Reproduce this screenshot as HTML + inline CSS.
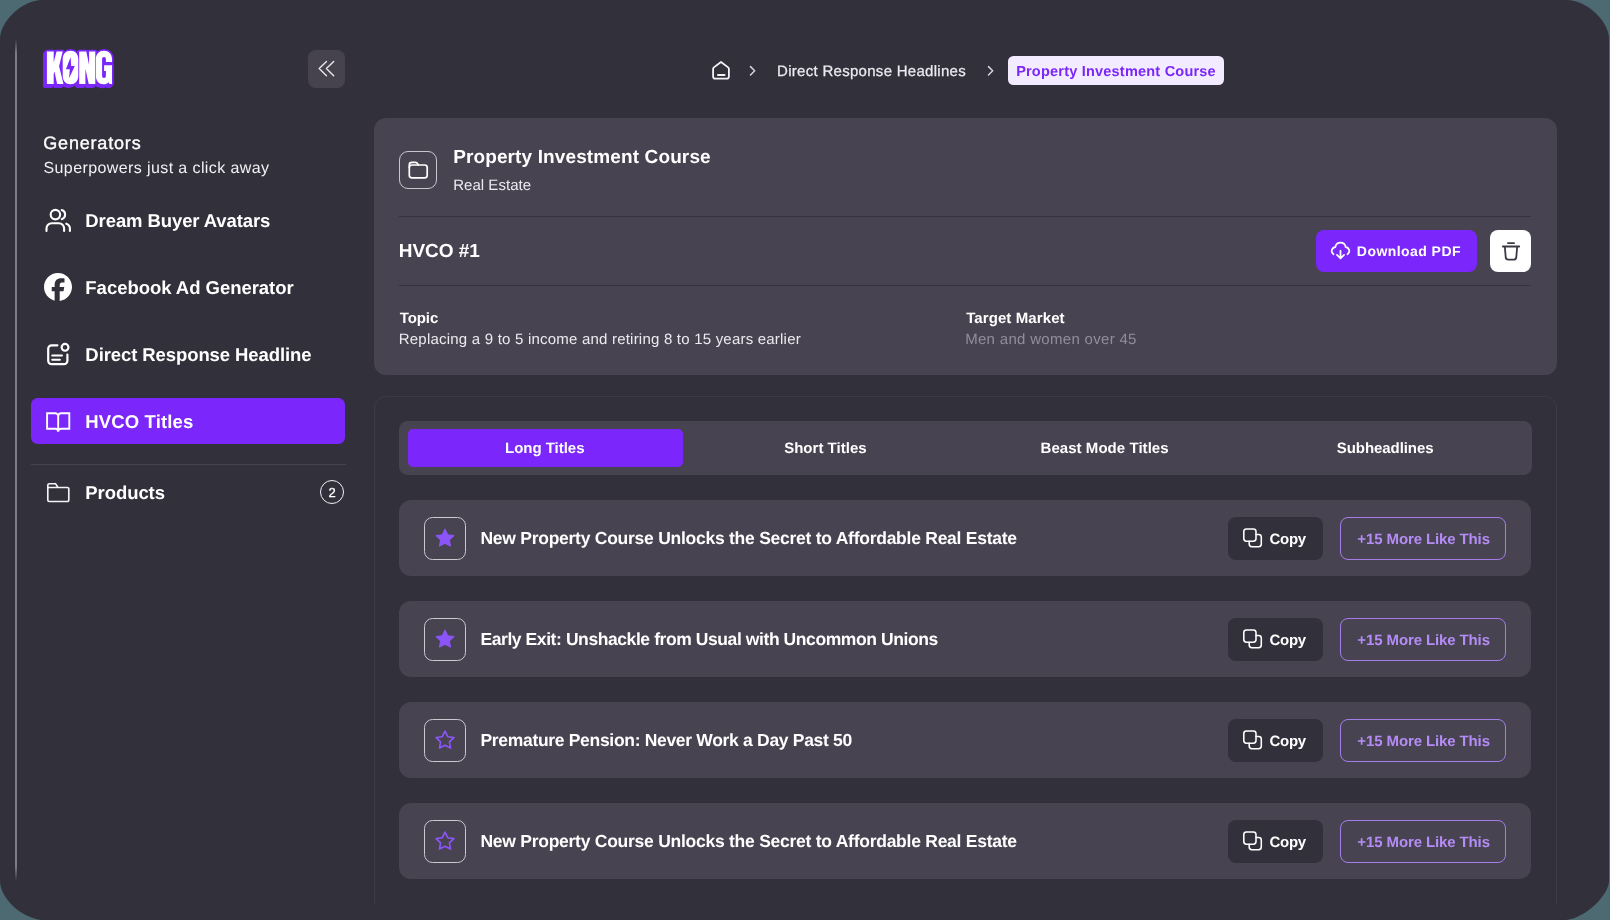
<!DOCTYPE html>
<html lang="en">
<head>
<meta charset="utf-8">
<title>Kong - HVCO Titles</title>
<style>
:root{--bg:#32303b;--card:#474350;--pur:#7b26fa;--teal:#4d6a73;}
*{box-sizing:border-box;margin:0;padding:0}
html,body{width:1610px;height:920px;overflow:hidden;background:var(--teal)}
body{position:relative;font-family:"Liberation Sans",sans-serif}
.a{position:absolute;display:block}
.t{position:absolute;white-space:nowrap;line-height:normal;font-family:"Liberation Sans",sans-serif}
#txt{position:absolute;left:0;top:0;width:1610px;height:920px;will-change:transform;text-rendering:geometricPrecision}
#app{position:absolute;left:0;top:0}
#vline{position:absolute;left:15px;top:39px;width:2px;height:842px;border-radius:1px;
  background:linear-gradient(to bottom,rgba(125,123,136,0) 0,rgba(125,123,136,1) 14px,rgba(125,123,136,1) 828px,rgba(125,123,136,0) 842px)}
#collapse{left:307.600px;top:49.800px;width:37.400px;height:38.100px;border-radius:8px;background:#46434f}
#active{left:31px;top:398.300px;width:314.400px;height:45.700px;border-radius:6.500px;background:var(--pur)}
#sdiv{left:31px;top:464px;width:315px;height:1px;background:#46434f}
#badge{left:320.100px;top:480.250px;width:24px;height:24px;border-radius:50%;border:1.5px solid #f2f1f6}
#chip{left:1007.950px;top:55.700px;width:216.350px;height:29.800px;border-radius:5.500px;background:#f3ebff}
#hcard{left:373.800px;top:118.400px;width:1183px;height:256.400px;border-radius:12px;background:var(--card)}
#ibox{left:399px;top:150.800px;width:38px;height:38px;border-radius:9px;border:1.200px solid #c9c7ce}
.hdiv{left:399px;width:1132px;height:1px;background:#35333d}
#dl{left:1315.700px;top:229.700px;width:161.700px;height:42.6px;border-radius:8px;background:var(--pur)}
#trash{left:1490px;top:229.7px;width:41.200px;height:42.6px;border-radius:8px;background:#fff}
#panel{left:373.800px;top:396.100px;width:1183.200px;height:540px;border-radius:12px;border:1px solid #3d3b47}
#tabs{left:399px;top:420.800px;width:1132.500px;height:54.300px;border-radius:8.500px;background:var(--card)}
#atab{left:407.600px;top:429.200px;width:275.500px;height:38px;border-radius:5px;background:var(--pur)}
.row{position:absolute;left:398.800px;width:1132.700px;height:76.200px;border-radius:12px;background:var(--card)}
.sbox{position:absolute;left:424.300px;width:42.200px;height:42.200px;border-radius:8.500px;border:1.200px solid #cbc9d0}
.copy{position:absolute;left:1227.8px;width:95.5px;height:42.8px;border-radius:8px;background:var(--bg)}
.more{position:absolute;left:1340.2px;width:166.3px;height:42.8px;border-radius:8px;border:1.5px solid #a47de9}
#fade{left:370px;top:904px;width:1195px;height:20px;background:var(--bg)}
</style>
</head>
<body>
<svg id="app" width="1610" height="920" viewBox="0 0 1610 920"><path fill="#32303b" d="M42.100 0H1566.900C1586.300 0 1609 21 1609 38.900V880.900C1609 894.900 1584 920.300 1562 920.300H47C22 920.300 0 897.900 0 880.900V38.900C0 21 22.700 0 42.100 0z"/></svg>
<div id="vline"></div>

<!-- logo -->
<svg class="a" id="logo" style="left:36px;top:42px" width="90" height="54" viewBox="0 0 90 54">
  <defs>
    <g id="kong">
      <path d="M10.9 9.4h6.8v11.2l2.8-11.2h6.2l-3.6 14.8 4.4 17.8h-6.4l-2.6-12.4-.8 2.6v9.8h-6.8z"/>
      <path fill-rule="evenodd" d="M34.5 8.8c4.6 0 7.8 3.2 7.8 8.4v16.6c0 5.2-3.2 8.5-7.8 8.5s-7.8-3.3-7.8-8.5V17.200c0-5.2 3.200-8.400 7.800-8.400z"/>
      <path d="M43.200 9.400h7.100l2.800 13.600V9.400h6.200V42h-6.600l-3.300-15.200V42h-6.200z"/>
      <path fill-rule="evenodd" d="M67.900 8.800c4.700 0 8.100 3.100 8.100 8.300v2.900h-6.100v-2.700c0-1.500-.7-2.200-1.900-2.200s-1.900.7-1.900 2.200v16.400c0 1.500.7 2.200 1.900 2.200s1.900-.7 1.900-2.200V29h-1.800v-5.800H76V42h-2.600l-.9-1.800c-1.100 1.400-2.800 2.100-4.900 2.100-4.700 0-7.700-3.300-7.700-8.500V17.100c0-5.200 3.300-8.300 8-8.300z"/>
    </g>
  </defs>
  <g fill="#7b26fa" stroke="#7b26fa" stroke-linejoin="round">
    <use href="#kong" stroke-width="3.4"/>
    <use href="#kong" stroke-width="3.4" transform="translate(-1.1,1.1)"/>
    <use href="#kong" stroke-width="3.4" transform="translate(-2.2,2.2)"/>
  </g>
  <use href="#kong" fill="#fff"/>
  <path d="M34.6 15.200l-4.700 12.100h3.900l-.7 8.900 5.700-12.100h-3.600z" fill="#7b26fa"/>
</svg>

<!-- collapse -->
<div class="a" id="collapse"></div>
<svg class="a" style="left:307px;top:50px" width="38" height="38" viewBox="0 0 38 38" fill="none" stroke="#eceaf0" stroke-width="1.350" stroke-linecap="round" stroke-linejoin="round">
  <path d="M19.500 11.400L12.200 18.550l7.300 7.150M26.700 11.400L19.400 18.550l7.300 7.150"/>
</svg>

<!-- nav icons -->
<svg class="a" style="left:44px;top:206px" width="30" height="30" viewBox="0 0 30 30" fill="none" stroke="#fff" stroke-width="2.100" stroke-linecap="round" stroke-linejoin="round">
  <circle cx="11.400" cy="8.600" r="4.750"/>
  <path d="M2.500 25v-2.500a5.200 5.200 0 0 1 5.200-5.200h7.200a5.200 5.200 0 0 1 5.200 5.200V25"/>
  <path d="M17.700 4a4.800 4.800 0 0 1 0 9.200"/>
  <path d="M22.300 17.700a5.200 5.200 0 0 1 3.600 4.900V25"/>
</svg>
<svg class="a" style="left:44.200px;top:272.900px" width="28" height="28" viewBox="0 0 24 24">
  <path fill="#fff" d="M9.101 23.691v-7.980H6.627v-3.667h2.474v-1.580c0-4.085 1.848-5.978 5.858-5.978.401 0 .955.042 1.468.103a8.680 8.680 0 0 1 1.141.195v3.325a8.623 8.623 0 0 0-.653-.036 26.805 26.805 0 0 0-.733-.009c-.707 0-1.259.096-1.675.309a1.686 1.686 0 0 0-.679.622c-.258.420-.374.995-.374 1.752v1.297h3.919l-.386 2.103-.287 1.564h-3.246v8.245C19.396 23.238 24 18.179 24 12.044c0-6.627-5.373-12-12-12s-12 5.373-12 12c0 5.628 3.874 10.350 9.101 11.647Z"/>
</svg>
<svg class="a" style="left:44px;top:341px" width="28" height="28" viewBox="0 0 28 28" fill="none" stroke="#fff" stroke-width="2.200" stroke-linecap="round" stroke-linejoin="round">
  <path d="M13.400 4.300H7.700a3.500 3.500 0 0 0-3.500 3.500v11.900a3.500 3.500 0 0 0 3.500 3.500h12.200a3.500 3.500 0 0 0 3.500-3.500v-6.100"/>
  <circle cx="21.050" cy="6.350" r="3.400"/>
  <path stroke-width="2" d="M8.200 14.400h9.800M8.200 18.800h7.700"/>
</svg>

<div class="a" id="active"></div>
<svg class="a" style="left:44px;top:408px" width="28" height="28" viewBox="0 0 28 28" fill="none" stroke="#fff" stroke-width="1.900" stroke-linejoin="miter">
  <path d="M14.200 8.300a3 3 0 0 0-3-3H3.100v15.500h8.100a3 3 0 0 1 3 3 3 3 0 0 1 3-3h8.100V5.300h-8.100a3 3 0 0 0-3 3zM14.200 8.300v15"/>
</svg>

<div class="a" id="sdiv"></div>
<svg class="a" style="left:44px;top:478px" width="28" height="28" viewBox="0 0 28 28" fill="none" stroke="#f4f3f7" stroke-width="1.650" stroke-linejoin="round">
  <path d="M3.800 9.500V7.200a1.500 1.500 0 0 1 1.500-1.500h5.400a1.500 1.500 0 0 1 1.300.700l2 3.100h9.300a1.500 1.500 0 0 1 1.500 1.500v11a1.500 1.500 0 0 1-1.500 1.500H5.300a1.500 1.500 0 0 1-1.500-1.500zM3.800 9.500h10.200"/>
</svg>
<div class="a" id="badge"></div>

<!-- breadcrumb -->
<svg class="a" style="left:709.200px;top:58.300px" width="24" height="24" viewBox="0 0 24 24" fill="none" stroke="#f4f3f7" stroke-width="1.800" stroke-linecap="round" stroke-linejoin="round">
  <path d="M12 4l-7.100 5.400a2.200 2.200 0 0 0-.800 1.700V18.400a2.200 2.200 0 0 0 2.200 2.200h11.400a2.200 2.200 0 0 0 2.200-2.200V11.100a2.200 2.200 0 0 0-.800-1.700z"/>
  <path d="M8.900 17h6.700"/>
</svg>
<svg class="a" style="left:740px;top:58px" width="24" height="24" viewBox="0 0 24 24" fill="none" stroke="#d6d4dc" stroke-width="1.500" stroke-linecap="round" stroke-linejoin="round"><path d="M10.500 8.600l4.200 4.200-4.200 4.200"/></svg>
<svg class="a" style="left:978.400px;top:58px" width="24" height="24" viewBox="0 0 24 24" fill="none" stroke="#d6d4dc" stroke-width="1.500" stroke-linecap="round" stroke-linejoin="round"><path d="M10.500 8.600l4.200 4.200-4.200 4.200"/></svg>
<div class="a" id="chip"></div>

<!-- header card -->
<div class="a" id="hcard"></div>
<div class="a" id="ibox"></div>
<svg class="a" style="left:406px;top:157.900px" width="24" height="24" viewBox="0 0 24 24" fill="none" stroke="#fff" stroke-width="1.700" stroke-linecap="round" stroke-linejoin="round">
  <path d="M3.300 9.300V6.700a2.400 2.400 0 0 1 2.400-2.400h3.700a2.400 2.400 0 0 1 2.200 1.400l.600 1.300"/>
  <rect x="3.300" y="7" width="17.900" height="12.800" rx="2.600"/>
</svg>
<div class="a hdiv" style="top:216.300px"></div>
<div class="a hdiv" style="top:284.700px"></div>
<div class="a" id="dl"></div>
<svg class="a" style="left:1329.750px;top:240.300px" width="21" height="21" viewBox="0 0 24 24" fill="none" stroke="#fff" stroke-width="2" stroke-linecap="round" stroke-linejoin="round">
  <path d="M4 16.242A4.500 4.500 0 0 1 6.080 8.020a6.002 6.002 0 0 1 11.840 0A4.500 4.500 0 0 1 20 16.242M8 17l4 4m0 0l4-4m-4 4v-9"/>
</svg>
<div class="a" id="trash"></div>
<svg class="a" style="left:1498.500px;top:239px" width="24" height="24" viewBox="0 0 24 24" fill="none" stroke="#3b3944" stroke-width="1.800" stroke-linecap="round" stroke-linejoin="round">
  <path d="M3.800 7.500h16.400M9 4.200h6M5.800 7.500l.900 10.600a2.700 2.700 0 0 0 2.700 2.500h5.200a2.700 2.700 0 0 0 2.700-2.500l.900-10.600"/>
</svg>

<!-- list panel -->
<div class="a" id="panel"></div>
<div class="a" id="tabs"></div>
<div class="a" id="atab"></div>
<div class="row" style="top:500.10px"></div>
<div class="sbox" style="top:517.35px"></div>
<svg class="a" style="left:434.40px;top:526.75px" width="22" height="22" viewBox="0 0 24 24"><path d="M12 2.300l3 6.100 6.700 1-4.850 4.700 1.150 6.700L12 17.650 6 20.800l1.150-6.700L2.300 9.400l6.700-1z" fill="#8b55f8" stroke="#8b55f8" stroke-width="1.100" stroke-linejoin="round"/></svg>
<div class="copy" style="top:517.05px"></div>
<svg class="a" style="left:1241px;top:526.25px" width="24" height="24" viewBox="0 0 24 24" fill="none" stroke="#fff" stroke-width="1.550" stroke-linecap="round"><path d="M15 8.400h2.700a2.600 2.600 0 0 1 2.600 2.600v7.100a2.600 2.600 0 0 1-2.600 2.600h-6.900a2.600 2.600 0 0 1-2.600-2.600v-2.900"/><rect x="2.800" y="3" width="12.200" height="12.200" rx="2.600"/></svg>
<div class="more" style="top:517.05px"></div>
<div class="row" style="top:601.10px"></div>
<div class="sbox" style="top:618.35px"></div>
<svg class="a" style="left:434.40px;top:627.75px" width="22" height="22" viewBox="0 0 24 24"><path d="M12 2.300l3 6.100 6.700 1-4.850 4.700 1.150 6.700L12 17.650 6 20.800l1.150-6.700L2.300 9.400l6.700-1z" fill="#8b55f8" stroke="#8b55f8" stroke-width="1.100" stroke-linejoin="round"/></svg>
<div class="copy" style="top:618.05px"></div>
<svg class="a" style="left:1241px;top:627.25px" width="24" height="24" viewBox="0 0 24 24" fill="none" stroke="#fff" stroke-width="1.550" stroke-linecap="round"><path d="M15 8.400h2.700a2.600 2.600 0 0 1 2.600 2.600v7.100a2.600 2.600 0 0 1-2.600 2.600h-6.900a2.600 2.600 0 0 1-2.600-2.600v-2.900"/><rect x="2.800" y="3" width="12.200" height="12.200" rx="2.600"/></svg>
<div class="more" style="top:618.05px"></div>
<div class="row" style="top:702.10px"></div>
<div class="sbox" style="top:719.35px"></div>
<svg class="a" style="left:434.40px;top:728.75px" width="22" height="22" viewBox="0 0 24 24"><path d="M12 2.300l3 6.100 6.700 1-4.850 4.700 1.150 6.700L12 17.650 6 20.800l1.150-6.700L2.300 9.400l6.700-1z" fill="none" stroke="#8b55f8" stroke-width="1.800" stroke-linejoin="round"/></svg>
<div class="copy" style="top:719.05px"></div>
<svg class="a" style="left:1241px;top:728.25px" width="24" height="24" viewBox="0 0 24 24" fill="none" stroke="#fff" stroke-width="1.550" stroke-linecap="round"><path d="M15 8.400h2.700a2.600 2.600 0 0 1 2.600 2.600v7.100a2.600 2.600 0 0 1-2.600 2.600h-6.900a2.600 2.600 0 0 1-2.600-2.600v-2.900"/><rect x="2.800" y="3" width="12.200" height="12.200" rx="2.600"/></svg>
<div class="more" style="top:719.05px"></div>
<div class="row" style="top:803.10px"></div>
<div class="sbox" style="top:820.35px"></div>
<svg class="a" style="left:434.40px;top:829.75px" width="22" height="22" viewBox="0 0 24 24"><path d="M12 2.300l3 6.100 6.700 1-4.850 4.700 1.150 6.700L12 17.650 6 20.800l1.150-6.700L2.300 9.400l6.700-1z" fill="none" stroke="#8b55f8" stroke-width="1.800" stroke-linejoin="round"/></svg>
<div class="copy" style="top:820.05px"></div>
<svg class="a" style="left:1241px;top:829.25px" width="24" height="24" viewBox="0 0 24 24" fill="none" stroke="#fff" stroke-width="1.550" stroke-linecap="round"><path d="M15 8.400h2.700a2.600 2.600 0 0 1 2.600 2.600v7.100a2.600 2.600 0 0 1-2.600 2.600h-6.900a2.600 2.600 0 0 1-2.600-2.600v-2.900"/><rect x="2.800" y="3" width="12.200" height="12.200" rx="2.600"/></svg>
<div class="more" style="top:820.05px"></div>
<div class="a" id="fade"></div>

<div id="txt">
<div class="t" style="left:43.29px;top:133px;font-size:18px;font-weight:400;color:#fff;letter-spacing:0.812px;-webkit-text-stroke:0.35px #fff;">Generators</div>
<div class="t" style="left:43.47px;top:160px;font-size:16px;font-weight:400;color:#f1f0f5;letter-spacing:0.402px;">Superpowers just a click away</div>
<div class="t" style="left:85.36px;top:210px;font-size:18.5px;font-weight:700;color:#fff;letter-spacing:-0.101px;">Dream Buyer Avatars</div>
<div class="t" style="left:85.36px;top:277px;font-size:18.5px;font-weight:700;color:#fff;letter-spacing:-0.036px;">Facebook Ad Generator</div>
<div class="t" style="left:85.36px;top:344px;font-size:18.5px;font-weight:700;color:#fff;letter-spacing:-0.090px;">Direct Response Headline</div>
<div class="t" style="left:85.36px;top:411px;font-size:18.5px;font-weight:700;color:#fff;letter-spacing:0.132px;">HVCO Titles</div>
<div class="t" style="left:85.36px;top:482px;font-size:18.5px;font-weight:700;color:#fff;letter-spacing:-0.084px;">Products</div>
<div class="t" style="left:328.38px;top:485px;font-size:13px;font-weight:400;color:#fff;letter-spacing:0.000px;-webkit-text-stroke:0.3px #fff;">2</div>
<div class="t" style="left:777.07px;top:63px;font-size:15px;font-weight:400;color:#ecebf1;letter-spacing:0.288px;-webkit-text-stroke:0.25px #ecebf1;">Direct Response Headlines</div>
<div class="t" style="left:1016.13px;top:64px;font-size:14.5px;font-weight:700;color:#7b26fa;letter-spacing:0.214px;">Property Investment Course</div>
<div class="t" style="left:453.13px;top:147px;font-size:19px;font-weight:700;color:#fff;letter-spacing:0.122px;">Property Investment Course</div>
<div class="t" style="left:453.17px;top:177px;font-size:15px;font-weight:400;color:#eceaf1;letter-spacing:0.035px;">Real Estate</div>
<div class="t" style="left:398.73px;top:241px;font-size:19px;font-weight:700;color:#fff;letter-spacing:-0.019px;">HVCO #1</div>
<div class="t" style="left:1356.86px;top:243px;font-size:14px;font-weight:700;color:#fff;letter-spacing:0.443px;">Download PDF</div>
<div class="t" style="left:399.73px;top:310px;font-size:15px;font-weight:700;color:#fff;letter-spacing:-0.096px;">Topic</div>
<div class="t" style="left:398.77px;top:331px;font-size:15px;font-weight:400;color:#eceaf1;letter-spacing:0.213px;">Replacing a 9 to 5 income and retiring 8 to 15 years earlier</div>
<div class="t" style="left:966.13px;top:310px;font-size:15px;font-weight:700;color:#fff;letter-spacing:0.099px;">Target Market</div>
<div class="t" style="left:965.17px;top:331px;font-size:15px;font-weight:400;color:#918e9b;letter-spacing:0.308px;">Men and women over 45</div>
<div class="t" style="left:505.00px;top:440px;font-size:15px;font-weight:700;color:#fff;letter-spacing:-0.022px;">Long Titles</div>
<div class="t" style="left:784.17px;top:440px;font-size:15px;font-weight:700;color:#fff;letter-spacing:0.018px;">Short Titles</div>
<div class="t" style="left:1040.50px;top:440px;font-size:15px;font-weight:700;color:#fff;letter-spacing:0.053px;">Beast Mode Titles</div>
<div class="t" style="left:1336.87px;top:440px;font-size:15px;font-weight:700;color:#fff;letter-spacing:-0.080px;">Subheadlines</div>
<div class="t" style="left:480.43px;top:528px;font-size:17.5px;font-weight:700;color:#fff;letter-spacing:-0.255px;">New Property Course Unlocks the Secret to Affordable Real Estate</div>
<div class="t" style="left:1269.58px;top:531px;font-size:15px;font-weight:700;color:#fff;letter-spacing:-0.335px;">Copy</div>
<div class="t" style="left:1357.37px;top:531px;font-size:15px;font-weight:700;color:#b58cf6;letter-spacing:-0.117px;">+15 More Like This</div>
<div class="t" style="left:480.43px;top:629px;font-size:17.5px;font-weight:700;color:#fff;letter-spacing:-0.416px;">Early Exit: Unshackle from Usual with Uncommon Unions</div>
<div class="t" style="left:1269.58px;top:632px;font-size:15px;font-weight:700;color:#fff;letter-spacing:-0.335px;">Copy</div>
<div class="t" style="left:1357.37px;top:632px;font-size:15px;font-weight:700;color:#b58cf6;letter-spacing:-0.117px;">+15 More Like This</div>
<div class="t" style="left:480.43px;top:730px;font-size:17.5px;font-weight:700;color:#fff;letter-spacing:-0.311px;">Premature Pension: Never Work a Day Past 50</div>
<div class="t" style="left:1269.58px;top:733px;font-size:15px;font-weight:700;color:#fff;letter-spacing:-0.335px;">Copy</div>
<div class="t" style="left:1357.37px;top:733px;font-size:15px;font-weight:700;color:#b58cf6;letter-spacing:-0.117px;">+15 More Like This</div>
<div class="t" style="left:480.43px;top:831px;font-size:17.5px;font-weight:700;color:#fff;letter-spacing:-0.255px;">New Property Course Unlocks the Secret to Affordable Real Estate</div>
<div class="t" style="left:1269.58px;top:834px;font-size:15px;font-weight:700;color:#fff;letter-spacing:-0.335px;">Copy</div>
<div class="t" style="left:1357.37px;top:834px;font-size:15px;font-weight:700;color:#b58cf6;letter-spacing:-0.117px;">+15 More Like This</div>
</div>
</body>
</html>
